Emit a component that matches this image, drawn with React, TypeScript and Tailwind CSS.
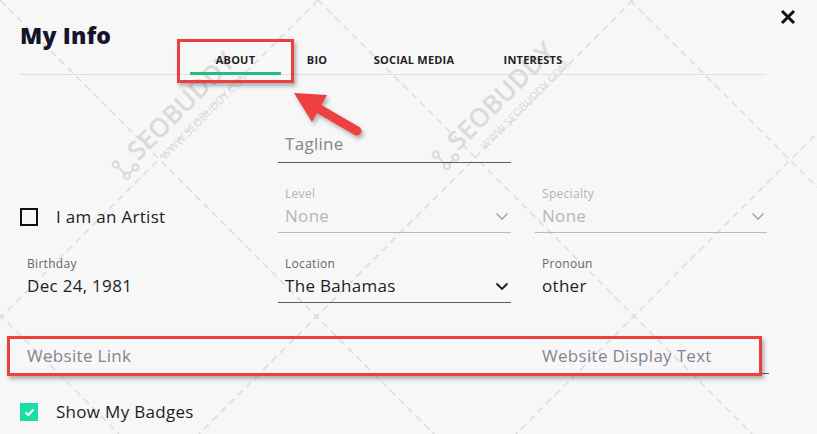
import React from "react";

const font = { fontFamily: '"Open Sans", "Noto Sans", sans-serif' };

function Chevron({ light }: { light?: boolean }) {
  return (
    <svg width="14" height="9" viewBox="0 0 14 9" className="shrink-0">
      <path
        d="M1.5 1.5 L7 7 L12.5 1.5"
        fill="none"
        stroke={light ? "#9a9aa4" : "#1a1a22"}
        strokeWidth={light ? 1.3 : 1.8}
      />
    </svg>
  );
}

function Field({
  label,
  value,
  light,
  chevron,
  underline,
}: {
  label: string;
  value: string;
  light?: boolean;
  chevron?: boolean;
  underline?: "light" | "dark" | "none";
}) {
  const border =
    underline === "light"
      ? "border-[#b9b9c2]"
      : underline === "dark"
      ? "border-[#5b5b6e]"
      : "border-transparent";
  return (
    <div className={`flex flex-col border-b ${border} pb-[5px]`}>
      <div
        className={`px-[7px] h-[14px] text-[12px] leading-[14px] tracking-[0.3px] ${
          light ? "text-[#b3b3b8]" : "text-[#66666e]"
        }`}
      >
        {label}
      </div>
      <div className="mt-[4px] flex items-center justify-between px-[7px] pr-[2px] h-[22px]">
        <span
          className={`text-[17px] leading-[22px] tracking-[0.3px] ${
            light ? "text-[#b6b6bc]" : "text-[#1d1d28]"
          }`}
        >
          {value}
        </span>
        {chevron && <Chevron light={light} />}
      </div>
    </div>
  );
}

function Watermark() {
  const diag1 = [-630, -315, 0, 318, 630, 945];
  const diag2 = [318, 633, 950, 1265];
  const marks = [
    { x: 168, y: 132 },
    { x: 488, y: 122 },
  ];
  return (
    <svg
      className="pointer-events-none absolute inset-0"
      width="817"
      height="434"
      viewBox="0 0 817 434"
    >
      <g stroke="#dcdcdc" strokeWidth="1.5" strokeDasharray="7 5" fill="none">
        {diag1.map((c) => (
          <line key={"a" + c} x1={c} y1={0} x2={c + 434} y2={434} />
        ))}
        {diag2.map((c) => (
          <line key={"b" + c} x1={c} y1={0} x2={c - 434} y2={434} />
        ))}
      </g>
      {marks.map((m, i) => (
        <g
          key={i}
          transform={`translate(${m.x} ${m.y}) rotate(-45)`}
          fill="#dadada"
          style={{ fontFamily: '"Open Sans", sans-serif' }}
        >
          <text x="-42" y="0" fontSize="26" fontWeight="600">
            SEOBUDDY
          </text>
          <text x="-22" y="18" fontSize="11">
            WWW.SEOBUDDY.COM
          </text>
          <g stroke="#dadada" strokeWidth="2" fill="none">
            <circle cx="-60" cy="-14" r="3" />
            <circle cx="-60" cy="2" r="3" />
            <circle cx="-48" cy="2" r="3" />
            <line x1="-60" y1="-11" x2="-60" y2="-1" />
            <line x1="-57" y1="2" x2="-51" y2="2" />
          </g>
        </g>
      ))}
    </svg>
  );
}

export default function App() {
  return (
    <div
      className="relative w-[817px] h-[434px] overflow-hidden bg-[#f7f7f7]"
      style={font}
    >
      <Watermark />

      <div className="relative px-[20px]">
        {/* Header */}
        <div className="w-[746px] border-b border-[#e0e0e0]">
          <h1 className="pt-[21px] h-[50px] text-[23px] leading-[29px] font-extrabold text-[#14142b] tracking-[0.2px]">
            My Info
          </h1>
          <div className="flex h-[24px] ml-[170px] text-[11px] font-bold text-[#1f1f28] tracking-[0.2px]">
            <div className="relative w-[91px] text-center pt-[3px] leading-[14px]">
              ABOUT
              <div className="absolute left-0 right-0 bottom-[-1px] h-[3px] bg-[#1fbf7e]" />
            </div>
            <div className="w-[72px] text-center pt-[3px] leading-[14px]">BIO</div>
            <div className="w-[122px] text-center pt-[3px] leading-[14px]">SOCIAL MEDIA</div>
            <div className="w-[116px] text-center pt-[3px] leading-[14px]">INTERESTS</div>
          </div>
        </div>

        {/* Form grid */}
        <div className="grid grid-cols-[236px_233px_234px] gap-x-[22px]">
          {/* Row 1 */}
          <div className="h-[88px]" />
          <div className="h-[88px] flex flex-col justify-end">
            <div className="border-b border-[#5b5b6e] pb-[7px] px-[7px] text-[17px] leading-[22px] tracking-[0.3px] text-[#85858f]">
              Tagline
            </div>
          </div>
          <div className="h-[88px]" />

          {/* Row 2 */}
          <div className="h-[70px] flex items-end pb-[5px]">
            <div className="flex items-center gap-[18px]">
              <div className="w-[18px] h-[18px] border-2 border-[#111]" />
              <span className="text-[17px] leading-[22px] tracking-[0.3px] text-[#1d1d28]">
                I am an Artist
              </span>
            </div>
          </div>
          <div className="h-[70px] flex flex-col justify-end">
            <Field label="Level" value="None" light chevron underline="light" />
          </div>
          <div className="h-[70px] flex flex-col justify-end ml-[2px]">
            <Field label="Specialty" value="None" light chevron underline="light" />
          </div>

          {/* Row 3 */}
          <div className="h-[70px] flex flex-col justify-end">
            <Field label="Birthday" value="Dec 24, 1981" underline="none" />
          </div>
          <div className="h-[70px] flex flex-col justify-end">
            <Field label="Location" value="The Bahamas" chevron underline="dark" />
          </div>
          <div className="h-[70px] flex flex-col justify-end ml-[2px]">
            <Field label="Pronoun" value="other" underline="none" />
          </div>
        </div>

        {/* Website row */}
        <div className="flex w-[749px] border-b border-[#5b5b6e] h-[71px] items-end pb-[6px]">
          <div className="w-[515px] px-[7px] text-[17px] leading-[22px] tracking-[0.3px] text-[#85858f]">
            Website Link
          </div>
          <div className="px-[7px] text-[17px] leading-[22px] tracking-[0.3px] text-[#85858f]">
            Website Display Text
          </div>
        </div>

        {/* Badges */}
        <div className="flex items-center gap-[18px] mt-[27px]">
          <div className="w-[18px] h-[18px] bg-[#18dfa6] flex items-center justify-center">
            <svg width="11" height="9" viewBox="0 0 11 9">
              <path d="M1.5 4.5 L4.2 7 L9.5 1.5" fill="none" stroke="#fff" strokeWidth="2.2" />
            </svg>
          </div>
          <span className="text-[17px] leading-[22px] tracking-[0.3px] text-[#1d1d28]">
            Show My Badges
          </span>
        </div>
      </div>

      {/* Close button */}
      <button className="absolute left-[779px] top-[8px] w-[17px] h-[17px] flex items-center justify-center">
        <svg width="16" height="16" viewBox="0 0 16 16">
          <path d="M2 2 L14 14 M14 2 L2 14" stroke="#111" strokeWidth="3" />
        </svg>
      </button>

      {/* Annotation overlays */}
      <div className="pointer-events-none absolute left-[177px] top-[39px] w-[117px] h-[44px] border-[3px] border-[#ec3f3f] shadow-[2px_3px_4px_rgba(0,0,0,0.3)]" />
      <div className="pointer-events-none absolute left-[7px] top-[336px] w-[755px] h-[40px] border-[3px] border-[#ec3f3f] shadow-[2px_3px_4px_rgba(0,0,0,0.3)]" />
      <svg
        className="pointer-events-none absolute left-0 top-0"
        width="817"
        height="434"
        viewBox="0 0 817 434"
        style={{ filter: "drop-shadow(2px 3px 2px rgba(0,0,0,0.3))" }}
      >
        <line x1="357" y1="131" x2="314" y2="106" stroke="#ef4040" strokeWidth="9" strokeLinecap="round" />
        <polygon points="294,93 327,95 312,122" fill="#ef4040" />
      </svg>
    </div>
  );
}
